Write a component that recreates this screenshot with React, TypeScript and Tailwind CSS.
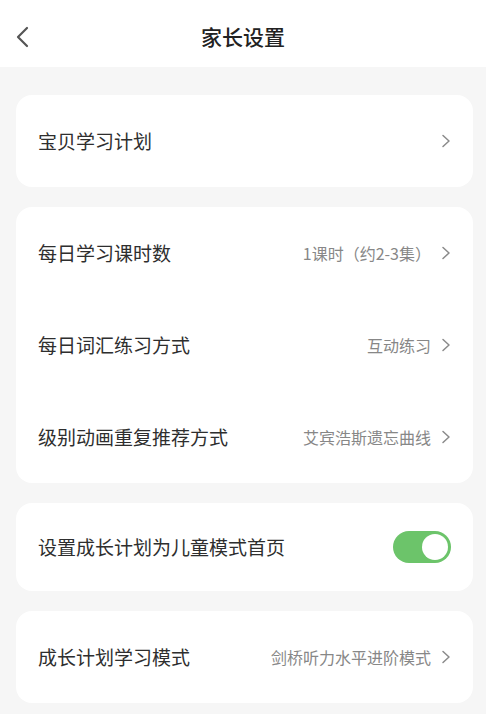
import React from 'react';

const font = "font-['Noto_Sans_CJK_SC','Noto_Sans',sans-serif]";

function Chevron() {
  return (
    <svg width="10" height="14" viewBox="0 0 10 14" fill="none" className="shrink-0">
      <path d="M2 1.5 L8 7 L2 12.5" stroke="#8a8a8a" strokeWidth="1.5" strokeLinecap="round" strokeLinejoin="round" />
    </svg>
  );
}

function Row({ label, value, h = 'h-[92px]' }: { label: string; value?: string; h?: string }) {
  return (
    <div className={`flex items-center justify-between px-[22px] ${h}`}>
      <span className="text-[19px] text-[#2e2e2e]">{label}</span>
      <div className="flex items-center gap-[10px]">
        {value && <span className="text-[16px] text-[#878787]">{value}</span>}
        <Chevron />
      </div>
    </div>
  );
}

function Card({ children }: { children: React.ReactNode }) {
  return <div className="ml-4 mr-[13px] rounded-2xl bg-white">{children}</div>;
}

export default function App() {
  const [on, setOn] = React.useState(true);
  return (
    <div className={`w-[486px] h-[714px] overflow-hidden bg-[#f6f6f6] ${font}`}>
      <div className="relative flex h-[67px] items-center justify-center bg-white">
        <svg width="14" height="22" viewBox="0 0 14 22" fill="none" className="absolute left-[15px] top-[26px]">
          <path d="M12 2 L3 11 L12 20" stroke="#555" strokeWidth="2.2" strokeLinecap="round" strokeLinejoin="round" />
        </svg>
        <span className="mt-[6px] text-[21px] font-medium text-[#222]">家长设置</span>
      </div>

      <div className="flex flex-col gap-5 pt-7">
        <Card>
          <Row label="宝贝学习计划" />
        </Card>
        <Card>
          <Row label="每日学习课时数" value="1课时（约2-3集）" />
          <Row label="每日词汇练习方式" value="互动练习" />
          <Row label="级别动画重复推荐方式" value="艾宾浩斯遗忘曲线" />
        </Card>
        <Card>
          <div className="flex h-[88px] items-center justify-between px-[22px]">
            <span className="text-[19px] text-[#2e2e2e]">设置成长计划为儿童模式首页</span>
            <button
              onClick={() => setOn(!on)}
              className={`flex h-[32px] w-[58px] items-center rounded-full p-[3px] ${on ? 'justify-end bg-[#6cc46a]' : 'justify-start bg-[#ddd]'}`}
            >
              <span className="h-[26px] w-[26px] rounded-full bg-white" />
            </button>
          </div>
        </Card>
        <Card>
          <Row label="成长计划学习模式" value="剑桥听力水平进阶模式" />
        </Card>
      </div>
    </div>
  );
}
